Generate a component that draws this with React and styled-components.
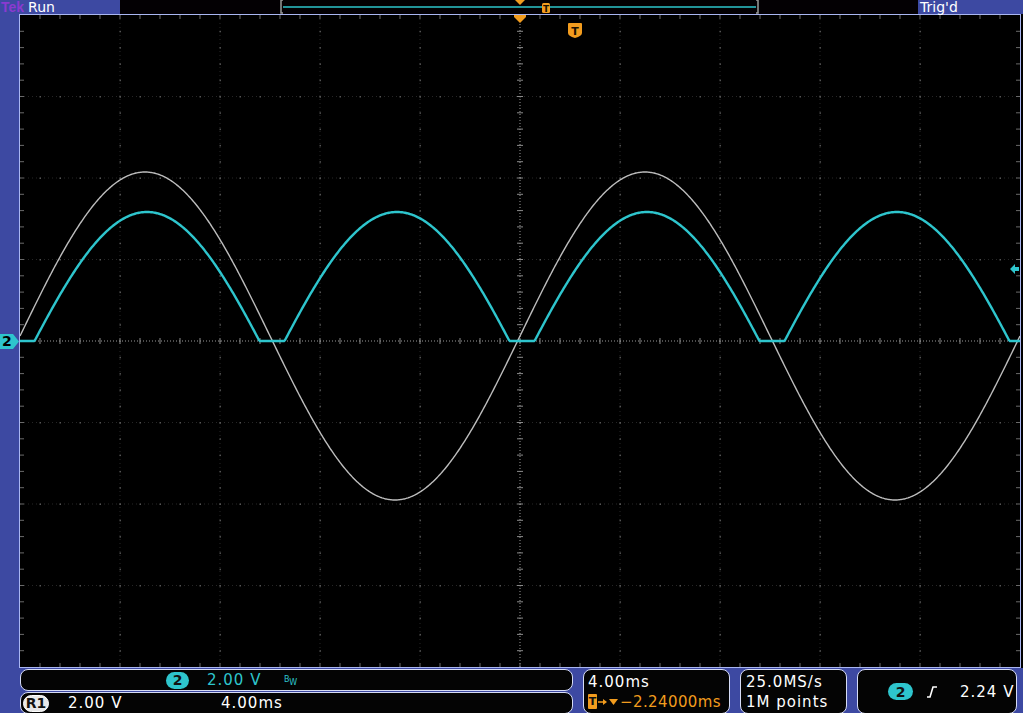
import React from 'react';
import styled, { createGlobalStyle } from 'styled-components';

const BLUE = '#3d49a2';
const EDGE = '#a9b6f2';
const CYAN = '#2ec5cd';
const ORANGE = '#f29c1e';
const FONT = '"DejaVu Sans", "Liberation Sans", sans-serif';

const GlobalStyle = createGlobalStyle`
  html, body { margin: 0; padding: 0; background: ${BLUE}; }
  #root { width: 1023px; height: 713px; overflow: hidden; }
`;

const Screen = styled.div`
  width: 1023px;
  height: 713px;
  display: flex;
  flex-direction: column;
  background: ${BLUE};
  font-family: ${FONT};
  color: #fff;
`;

const TopBar = styled.div`
  height: 14px;
  display: flex;
  position: relative;
  z-index: 1;
`;

const Status = styled.div`
  width: ${p => p.$w}px;
  height: 14px;
  background: ${BLUE};
  display: flex;
  align-items: center;
  gap: 4px;
  padding-left: ${p => p.$pad || 0}px;
  box-sizing: border-box;
  font-size: 14px;
  line-height: 14px;
`;

const TekLogo = styled.span`
  color: #8a3ad0;
  font-family: "Liberation Sans", sans-serif;
  font-size: 14px;
  line-height: 14px;
  font-weight: 700;
`;

const RecordView = styled.div`
  flex: 1;
  background: #030003;
  display: flex;
`;

const Middle = styled.div`
  height: 654px;
  display: flex;
  background: #000;
`;

const LeftRail = styled.div`
  width: 19px;
  background: ${BLUE};
  position: relative;
`;

const ChannelMarker = styled.div`
  position: absolute;
  left: 0;
  top: ${p => p.$top}px;
  width: 19px;
  height: 15px;
  background: ${CYAN};
  clip-path: polygon(0 0, 13px 0, 19px 50%, 13px 100%, 0 100%);
  color: #000;
  font-size: 14px;
  font-weight: 700;
  line-height: 15px;
  padding-left: 2px;
  box-sizing: border-box;
`;

const Graticule = styled.div`
  width: 1002px;
  height: 654px;
  box-sizing: border-box;
  border: 1px solid ${EDGE};
  background: #000;
  display: flex;
`;

const Bottom = styled.div`
  flex: 1;
  display: flex;
  gap: 10px;
  padding: 1px 6px 1px 20px;
  box-sizing: border-box;
`;

const Stack = styled.div`
  width: 553px;
  display: flex;
  flex-direction: column;
  gap: 1px;
`;

const Readout = styled.div`
  box-sizing: border-box;
  width: ${p => (p.$w ? `${p.$w}px` : 'auto')};
  flex: ${p => (p.$w ? 'none' : 1)};
  background: #040404;
  border: 1px solid #d6dcf6;
  border-radius: 8px;
  display: flex;
  flex-direction: ${p => (p.$col ? 'column' : 'row')};
  align-items: ${p => (p.$col ? 'flex-start' : 'center')};
  justify-content: ${p => (p.$col ? 'center' : 'flex-start')};
  padding-left: ${p => p.$pad || 0}px;
  font-size: 15px;
  letter-spacing: 1px;
  line-height: 20px;
  overflow: hidden;
`;

const Slot = styled.span`
  width: ${p => p.$w}px;
  flex: none;
  color: ${p => p.$color || '#fff'};
  display: flex;
  align-items: center;
`;

const Pill = styled.span`
  display: inline-flex;
  align-items: center;
  justify-content: center;
  width: ${p => p.$w || 23}px;
  height: 17px;
  border-radius: 9px;
  background: ${p => p.$bg || CYAN};
  color: #111;
  font-size: 14px;
  font-weight: 700;
  letter-spacing: 0;
  border: ${p => (p.$ring ? '1px solid #fff' : 'none')};
  box-sizing: border-box;
`;

const Bw = styled.span`
  color: ${CYAN};
  font-size: 8px;
  letter-spacing: 0;
  line-height: 8px;
  span { position: relative; top: 3px; }
`;

const Line = styled.div`
  display: flex;
  align-items: center;
  color: ${p => p.$color || '#fff'};
  gap: 1px;
  letter-spacing: ${p => p.$tight ? '0.4px' : '1px'};
`;

const TBox = styled.span`
  display: inline-flex;
  width: 9px;
  height: 15px;
  background: ${ORANGE};
  color: #111;
  font-size: 11px;
  font-weight: 700;
  letter-spacing: 0;
  align-items: center;
  justify-content: center;
  border-radius: 1px;
`;

const W = 1000;
const H = 652;
const DX = 100;
const DY = H / 8;

function wavePath(fn) {
  let d = '';
  for (let x = 0; x <= W; x += 1) {
    d += `${x === 0 ? 'M' : 'L'}${x} ${fn(x).toFixed(2)} `;
  }
  return d;
}

const grayWave = wavePath(x => 321 - 164 * Math.sin((2 * Math.PI * x) / 500));
const cyanWave = wavePath(
  x => 326 - Math.max(0, 153 * Math.abs(Math.sin((2 * Math.PI * (x - 2)) / 500)) - 24)
);

function GridDots() {
  const items = [];
  // major verticals
  for (let i = 1; i < 10; i++) {
    if (i === 5) continue;
    const x = i * DX;
    items.push(
      <line key={`v${i}`} x1={x} y1={0} x2={x} y2={H} stroke="#262626" strokeDasharray="1 3" />
    );
    for (let j = 1; j < 40; j++) {
      items.push(<rect key={`vd${i}-${j}`} x={x - 0.5} y={j * (DY / 5) - 0.5} width={1.5} height={1.5} fill="#555" />);
    }
  }
  // major horizontals
  for (let j = 1; j < 8; j++) {
    if (j === 4) continue;
    const y = j * DY;
    items.push(
      <line key={`h${j}`} x1={0} y1={y} x2={W} y2={y} stroke="#262626" strokeDasharray="1 3" />
    );
    for (let i = 1; i < 50; i++) {
      items.push(<rect key={`hd${j}-${i}`} x={i * 20 - 0.5} y={y - 0.5} width={1.5} height={1.5} fill="#555" />);
    }
  }
  // center crosshair
  items.push(<line key="ch" x1={0} y1={H / 2} x2={W} y2={H / 2} stroke="#9a9a9a" strokeDasharray="1 2" />);
  items.push(<line key="cv" x1={W / 2} y1={0} x2={W / 2} y2={H} stroke="#9a9a9a" strokeDasharray="1 2" />);
  for (let i = 1; i < 50; i++) {
    const x = i * 20;
    items.push(<line key={`cht${i}`} x1={x} y1={H / 2 - 3} x2={x} y2={H / 2 + 3} stroke="#8a8a8a" />);
    items.push(<line key={`tt${i}`} x1={x} y1={0} x2={x} y2={4} stroke="#6a6a6a" />);
    items.push(<line key={`bt${i}`} x1={x} y1={H - 4} x2={x} y2={H} stroke="#6a6a6a" />);
  }
  for (let j = 1; j < 40; j++) {
    const y = j * (DY / 5);
    items.push(<line key={`cvt${j}`} x1={W / 2 - 3} y1={y} x2={W / 2 + 3} y2={y} stroke="#8a8a8a" />);
    items.push(<line key={`lt${j}`} x1={0} y1={y} x2={4} y2={y} stroke="#6a6a6a" />);
    items.push(<line key={`rt${j}`} x1={W - 4} y1={y} x2={W} y2={y} stroke="#6a6a6a" />);
  }
  return <g>{items}</g>;
}

function Plot() {
  return (
    <svg width={W} height={H} viewBox={`0 0 ${W} ${H}`}>
      <GridDots />
      <path d={grayWave} fill="none" stroke="#bdbdbd" strokeWidth="1.4" />
      <path d={cyanWave} fill="none" stroke={CYAN} strokeWidth="2.4" strokeLinejoin="round" />
      {/* trigger position */}
      <polygon points="494,0 506,0 506,2 500,8 494,2" fill={ORANGE} />
      <path d="M548 9 Q548 8 549 8 L561 8 Q562 8 562 9 L562 18 Q562 21 555 23 Q548 21 548 18 Z" fill={ORANGE} />
      <text x="555" y="19.5" textAnchor="middle" fontSize="11" fontWeight="700" fontFamily="DejaVu Sans" fill="#1a1000">T</text>
      {/* trigger level */}
      <polygon points="990,254 995,249 995,252 999,252 999,256 995,256 995,259" fill={CYAN} />
    </svg>
  );
}

function RecordBar() {
  return (
    <svg width="798" height="14" viewBox="0 0 798 14">
      <path d="M163 0 L161 0 L161 13 L163 13" fill="none" stroke="#9a9a9a" strokeWidth="1.5" />
      <path d="M636 0 L638 0 L638 13 L636 13" fill="none" stroke="#9a9a9a" strokeWidth="1.5" />
      <line x1="163" y1="7" x2="636" y2="7" stroke={CYAN} strokeWidth="1.3" />
      <polygon points="395,0 405,0 400,5" fill={ORANGE} />
      <rect x="422" y="3" width="8" height="10" rx="1.5" fill={ORANGE} />
      <text x="426" y="11.5" textAnchor="middle" fontSize="9" fontWeight="700" fontFamily="DejaVu Sans" fill="#1a1000">T</text>
    </svg>
  );
}

function EdgeIcon() {
  return (
    <svg width="12" height="14" viewBox="0 0 12 14">
      <path d="M1 12 L4 12 L7 2 L11 2" fill="none" stroke="#fff" strokeWidth="1.6" />
    </svg>
  );
}

export default function App() {
  return (
    <Screen>
      <GlobalStyle />
      <TopBar>
        <Status $w={120} $pad={1}>
          <TekLogo>Tek</TekLogo>
          <span>Run</span>
        </Status>
        <RecordView>
          <RecordBar />
        </RecordView>
        <Status $w={105} $pad={2}>
          <span>Trig'd</span>
        </Status>
      </TopBar>

      <Middle>
        <LeftRail>
          <ChannelMarker $top={320}>2</ChannelMarker>
        </LeftRail>
        <Graticule>
          <Plot />
        </Graticule>
      </Middle>

      <Bottom>
        <Stack>
          <Readout $pad={145}>
            <Slot $w={41}>
              <Pill>2</Pill>
            </Slot>
            <Slot $w={77} $color={CYAN}>2.00 V</Slot>
            <Bw>B<span>W</span></Bw>
          </Readout>
          <Readout $pad={2}>
            <Slot $w={45}>
              <Pill $w={26} $bg="#e8e8e8" $ring>R1</Pill>
            </Slot>
            <Slot $w={153}>2.00 V</Slot>
            <span>4.00ms</span>
          </Readout>
        </Stack>
        <Readout $w={147} $col $pad={4}>
          <Line>4.00ms</Line>
          <Line $color={ORANGE} $tight>
            <TBox>T</TBox>
            <svg width="21" height="10" viewBox="0 0 21 10">
              <path d="M0 5 L6 5" stroke={ORANGE} strokeWidth="1.6" />
              <polygon points="5,2 9,5 5,8" fill={ORANGE} />
              <polygon points="11,2 20,2 15.5,8" fill={ORANGE} />
            </svg>
            <span>−2.24000ms</span>
          </Line>
        </Readout>
        <Readout $w={107} $col $pad={5}>
          <Line>25.0MS/s</Line>
          <Line>1M points</Line>
        </Readout>
        <Readout $pad={30}>
          <Slot $w={38}>
            <Pill $w={25}>2</Pill>
          </Slot>
          <Slot $w={34}>
            <EdgeIcon />
          </Slot>
          <span>2.24 V</span>
        </Readout>
      </Bottom>
    </Screen>
  );
}
